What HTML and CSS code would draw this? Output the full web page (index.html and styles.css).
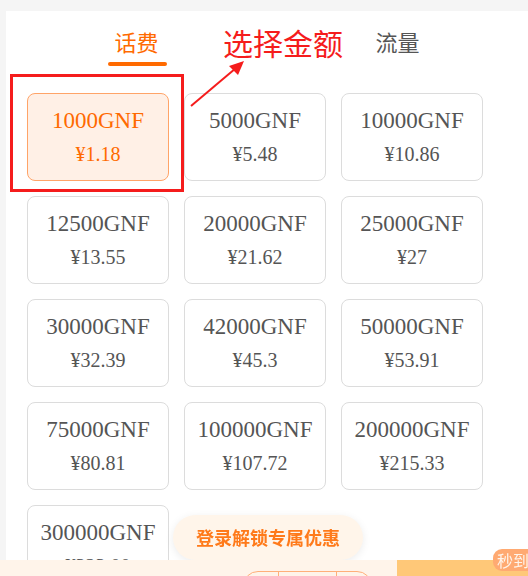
FILE: index.html
```html
<!DOCTYPE html>
<html>
<head>
<meta charset="utf-8">
<link rel="stylesheet" href="styles.css">
</head>
<body>
	<div class="page">
		<div class="tabs">
			<div class="tab active">话费<span class="bar"></span></div>
			<div class="tab">流量</div>
		</div>

		<div class="grid">
			<div class="card selected"><div class="amount">1000GNF</div><div class="price">¥1.18</div></div>
			<div class="card"><div class="amount">5000GNF</div><div class="price">¥5.48</div></div>
			<div class="card"><div class="amount">10000GNF</div><div class="price">¥10.86</div></div>
			<div class="card"><div class="amount">12500GNF</div><div class="price">¥13.55</div></div>
			<div class="card"><div class="amount">20000GNF</div><div class="price">¥21.62</div></div>
			<div class="card"><div class="amount">25000GNF</div><div class="price">¥27</div></div>
			<div class="card"><div class="amount">30000GNF</div><div class="price">¥32.39</div></div>
			<div class="card"><div class="amount">42000GNF</div><div class="price">¥45.3</div></div>
			<div class="card"><div class="amount">50000GNF</div><div class="price">¥53.91</div></div>
			<div class="card"><div class="amount">75000GNF</div><div class="price">¥80.81</div></div>
			<div class="card"><div class="amount">100000GNF</div><div class="price">¥107.72</div></div>
			<div class="card"><div class="amount">200000GNF</div><div class="price">¥215.33</div></div>
			<div class="card"><div class="amount">300000GNF</div><div class="price">¥323.00</div></div>
		</div>

		<!-- annotation drawn over the screenshot -->
		<div class="note">选择金额</div>
		<svg class="marks" width="528" height="220" viewBox="0 0 528 220">
			<rect x="11.5" y="75.5" width="171" height="115" fill="none" stroke="#f51c1c" stroke-width="3"/>
			<line x1="191" y1="106" x2="236" y2="68" stroke="#f51c1c" stroke-width="2"/>
			<polygon points="244,61 229,66 238,75" fill="#f51c1c"/>
		</svg>
	</div>

	<div class="login-pill">登录解锁专属优惠</div>

	<div class="bottom-bar">
		<div class="bar-left">
			<div class="stepper"><span></span><span></span><span></span></div>
		</div>
		<div class="bar-right"></div>
		<div class="badge">秒到</div>
	</div>
</body>
</html>
```

FILE: styles.css
```css
body {
	margin: 0;
	background: #f5f5f5;
	font-family: "Noto Sans CJK SC", sans-serif;
	overflow: hidden;
}
.page {
	position: relative;
	margin: 11px 0 0 6px;
	height: 600px;
	background: #fff;
}
.tabs {
	display: flex;
	padding-top: 15px;
	height: 55px;
}
.tab {
	flex: 1;
	position: relative;
	text-align: center;
	font-size: 22px;
	line-height: 30px;
	color: #555;
}
.tab.active {
	color: #ff6a00;
}
.tab .bar {
	position: absolute;
	left: 50%;
	top: 36px;
	width: 59px;
	height: 4px;
	margin-left: -29px;
	border-radius: 2px;
	background: #ff6a00;
}
.grid {
	display: grid;
	grid-template-columns: repeat(3, 142px);
	grid-auto-rows: 88px;
	column-gap: 15px;
	row-gap: 15px;
	padding: 12px 0 0 21px;
}
.card {
	box-sizing: border-box;
	border: 1px solid #dcdcdc;
	border-radius: 8px;
	padding-top: 11px;
	text-align: center;
	font-family: "Liberation Serif", serif;
	color: #555;
}
.card .amount {
	font-size: 23px;
	line-height: 32px;
}
.card .price {
	font-size: 20px;
	line-height: 34px;
}
.card.selected {
	background: #fff0e6;
	border-color: #ffa468;
	color: #ff6a00;
}
.note {
	position: absolute;
	left: 217px;
	top: 11px;
	font-size: 30px;
	line-height: 40px;
	color: #f51c1c;
}
.marks {
	position: absolute;
	left: -6px;
	top: -11px;
}
.login-pill {
	position: fixed;
	left: 173px;
	top: 515px;
	width: 190px;
	height: 45px;
	border-radius: 23px;
	background: #fff5ea;
	box-shadow: 0 2px 8px rgba(0, 0, 0, 0.08);
	color: #ff7a1a;
	font-size: 18px;
	font-weight: bold;
	line-height: 45px;
	text-align: center;
}
.bottom-bar {
	position: fixed;
	left: 0;
	right: 0;
	top: 560px;
	height: 50px;
	display: flex;
}
.bar-left {
	width: 397px;
	background: #fff4ea;
	position: relative;
}
.bar-right {
	flex: 1;
	background: #ffc878;
}
.stepper {
	position: absolute;
	left: 243px;
	top: 11px;
	width: 127px;
	height: 30px;
	border: 1px solid #ffb07a;
	border-radius: 15px;
	display: flex;
}
.stepper span {
	border-right: 1px solid #ffb07a;
	width: 35px;
}
.stepper span:nth-child(2) {
	width: 58px;
}
.stepper span:last-child {
	border-right: none;
}
.badge {
	position: absolute;
	left: 493px;
	top: -11px;
	width: 50px;
	height: 22px;
	padding-left: 4px;
	border-radius: 9px 0 0 9px;
	background: #ffaa72;
	color: #fff4ea;
	font-size: 16px;
	line-height: 22px;
}
```
